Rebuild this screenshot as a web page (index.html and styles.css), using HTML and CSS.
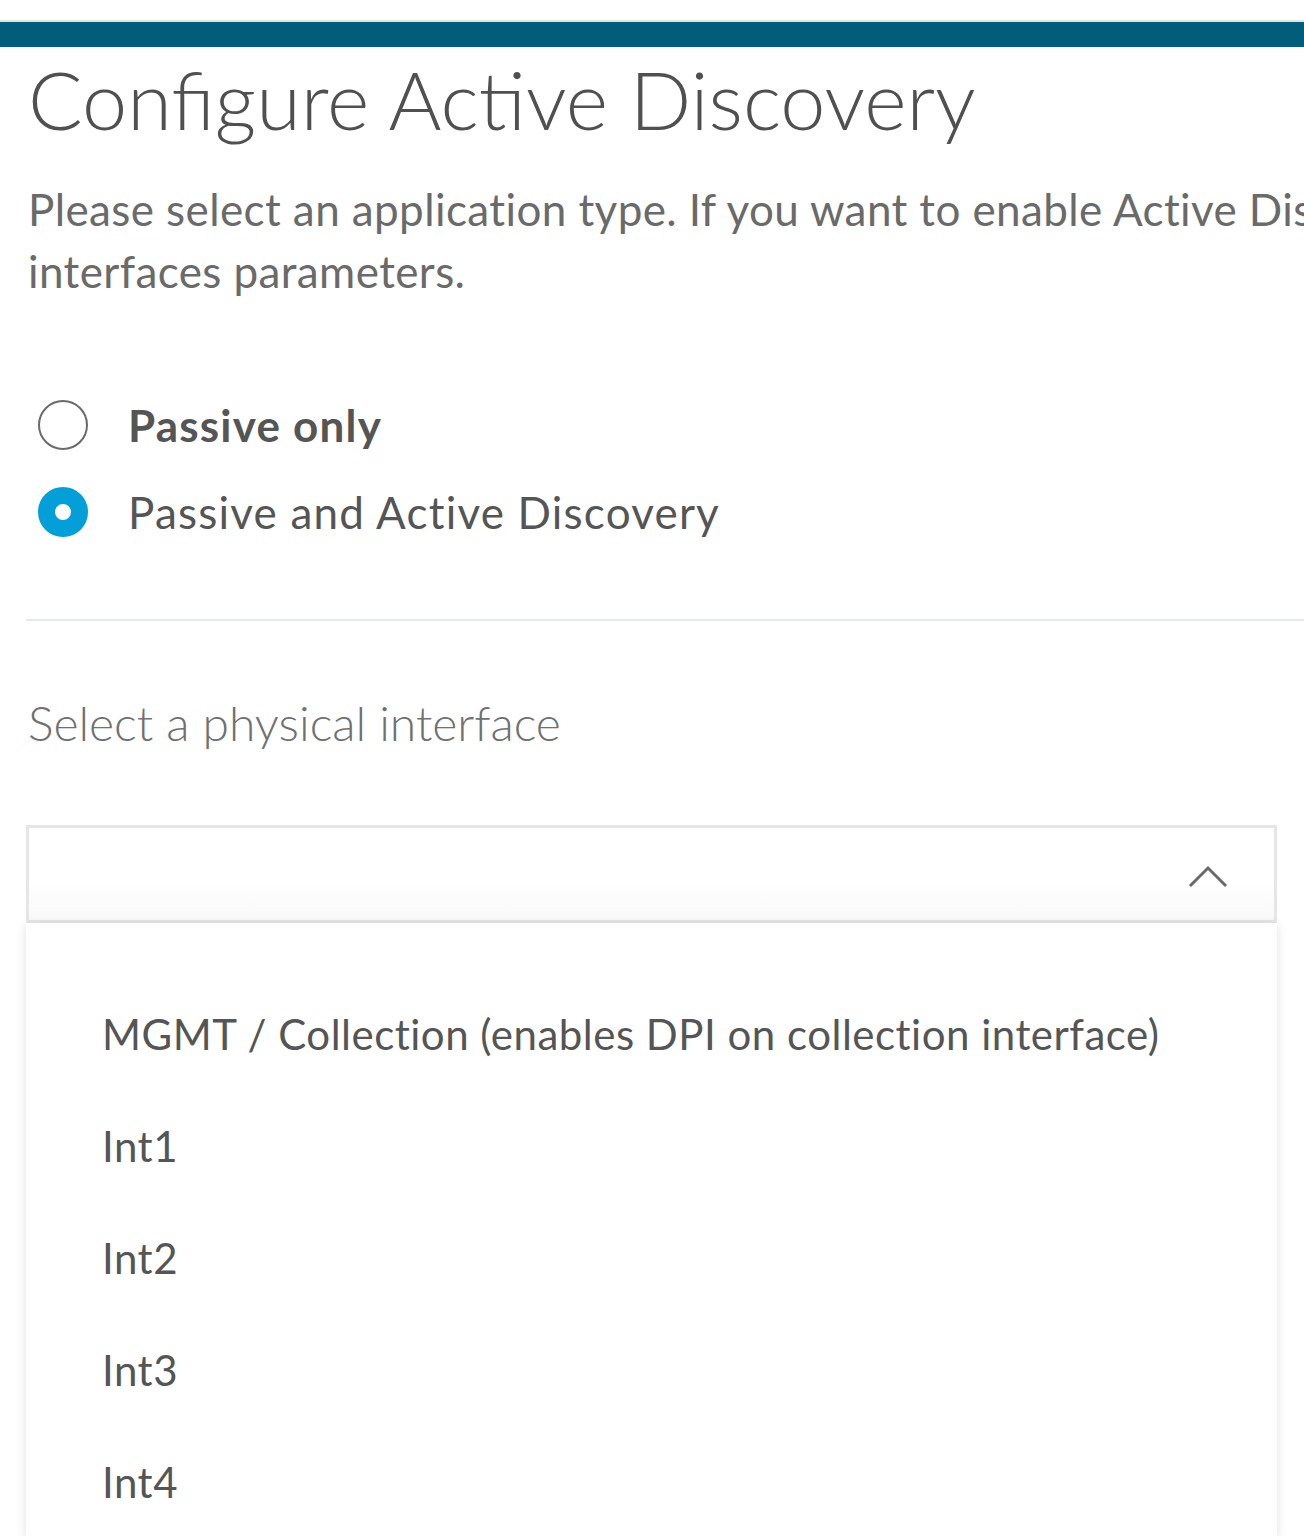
FILE: index.html
```html
<!DOCTYPE html>
<html lang="en">
<head>
  <meta charset="UTF-8">
  <meta name="viewport" content="width=device-width, initial-scale=1">
  <title>Configure Active Discovery</title>
  <link rel="stylesheet" href="styles.css">
</head>
<body>
  <div class="topbar"></div>
  <main class="page">
    <h1>Configure Active Discovery</h1>
    <p class="intro">
      <span class="line">Please select an application type. If you want to enable Active Discovery, please configure the physical</span>
      <span class="line">interfaces parameters.</span>
    </p>

    <div class="radios">
      <label class="radio">
        <span class="dot"></span>
        <span class="radio-label bold">Passive only</span>
      </label>
      <label class="radio checked">
        <span class="dot"></span>
        <span class="radio-label">Passive and Active Discovery</span>
      </label>
    </div>

    <hr class="divider">

    <h2>Select a physical interface</h2>

    <div class="select">
      <div class="select-box">
        <svg class="chevron" width="40" height="26" viewBox="0 0 40 26">
          <path d="M2 23 L20 5 L38 23" fill="none" stroke="#6a6a6a" stroke-width="3"/>
        </svg>
      </div>
      <ul class="options">
        <li>MGMT / Collection (enables DPI on collection interface)</li>
        <li>Int1</li>
        <li>Int2</li>
        <li>Int3</li>
        <li>Int4</li>
      </ul>
    </div>
  </main>
</body>
</html>
```

FILE: styles.css
```css
html, body { margin: 0; overflow: hidden; background: #fff; }
body { font-family: Lato, "Open Sans", sans-serif; color: #555; }
.topbar { margin-top: 20px; border-top: 2px solid #e4e4e4; height: 25px; background: #025d7b; }
.page { padding-left: 28px; }
h1 { margin: 3px 0 0; font-size: 81px; font-weight: 300; line-height: 98px; color: #505050; white-space: nowrap; }
.intro { margin: 30px 0 0; font-size: 44px; line-height: 62px; letter-spacing: 0.4px; color: #6a6a6a; overflow: hidden; }
.intro .line { display: block; white-space: nowrap; }
.radios { margin-top: 98px; display: flex; flex-direction: column; gap: 37px; }
.radio { display: flex; align-items: center; gap: 40px; margin-left: 10px; height: 50px; }
.dot { width: 50px; height: 50px; box-sizing: border-box; border: 2px solid #6a6a6a; border-radius: 50%; }
.radio.checked .dot { border: 17px solid #049fd9; }
.radio-label { font-size: 44px; letter-spacing: 1.2px; color: #555; }
.radio-label.bold { font-weight: 700; }
.divider { margin: 82px 0 0 -2px; border: none; height: 2px; background: #e4e9f0; }
h2 { margin: 72px 0 0; font-size: 48px; font-weight: 300; line-height: 60px; color: #707070; }
.select { margin-top: 72px; margin-left: -2px; width: 1251px; }
.select-box { height: 92px; border: 3px solid #e6e6e6; background: linear-gradient(#fff 60%, #f9f9f9); display: flex; align-items: center; justify-content: flex-end; padding-right: 46px; }
.chevron { margin-top: 4px; }
.options { list-style: none; margin: 0; padding: 55px 0 0 76px; background: #fff; box-shadow: 0 2px 10px rgba(0,0,0,0.12); }
.options li { font-size: 42px; line-height: 112px; letter-spacing: 0.5px; color: #555; }
```
